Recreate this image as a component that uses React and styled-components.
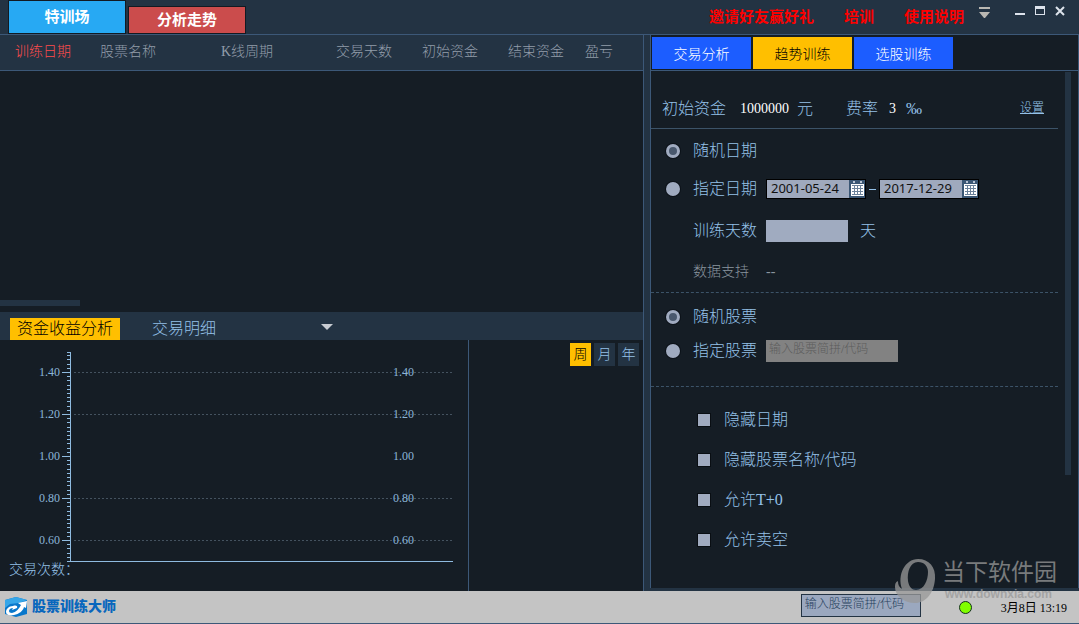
import React, { useState } from 'react';
import styled, { createGlobalStyle } from 'styled-components';

const GlobalStyle = createGlobalStyle`
  * {
    box-sizing: border-box;
  }
  body {
    margin: 0;
    background: #151d25;
    font-family: "Liberation Serif", "Noto Sans CJK SC", serif;
    font-size: 16px;
    font-weight: 300;
    color: #94c1e8;
  }
  button, input {
    margin: 0;
    padding: 0;
    border: 0;
    border-radius: 0;
    font: inherit;
    color: inherit;
    background: none;
  }
  button {
    cursor: pointer;
  }
`

const Window = styled.div`
  display: flex;
  flex-direction: column;
  min-height: 100vh;
  position: relative;
  overflow: hidden;
`

/* ---- title bar ---- */

const TitleBar = styled.header`
  display: flex;
  justify-content: space-between;
  height: 35px;
  background: #233343;
  border-bottom: 1px solid #3c5878;
`

const MainTabs = styled.nav`
  display: flex;
  align-items: flex-end;
  gap: 2px;
  padding-left: 8px;
`

const MainTab = styled.button`
  width: 118px;
  height: ${props => props.$active ? '34px' : '28px'};
  border: 1px solid #121a22;
  background: ${props => props.$active ? '#27a9f3' : '#cb4c4c'};
  color: #fff;
  font-size: 15px;
  line-height: 20px;
  font-weight: bold;
`

const TitleRight = styled.div`
  display: flex;
  align-items: flex-start;
`

const TitleLink = styled.a`
  margin-right: 30px;
  color: #fe0000;
  font-size: 15px;
  font-weight: bold;
  line-height: 34px;
  text-decoration: none;
  &:last-of-type {
    margin-right: 14px;
  }
`

const WindowButtons = styled.div`
  display: flex;
  gap: 8px;
  padding: 5px 13px 0 0;
`

const WindowButton = styled.button`
  width: 12px;
  height: 14px;
  margin-left: ${props => props.$spaced ? '16px' : '0'};
  svg {
    display: block;
  }
`

/* ---- body ---- */

const Body = styled.main`
  display: grid;
  grid-template-columns: minmax(0, 1fr) 429px;
  column-gap: 6px;
  flex: 1;
  background: #233343;
`

const LeftSide = styled.section`
  display: flex;
  flex-direction: column;
  background: #151d25;
  border-right: 1px solid #3c5878;
`

const RecordPane = styled.div`
  display: flex;
  flex-direction: column;
  justify-content: space-between;
  flex: 1;
`

const RecordTable = styled.table`
  width: 100%;
  table-layout: fixed;
  border-collapse: collapse;
`

const HeadRow = styled.tr`
  height: 35px;
  background: #233343;
  border-bottom: 1px solid #3c5878;
`

const HeadCell = styled.th`
  width: ${props => props.$width};
  padding: 0 0 0 15px;
  text-align: left;
  white-space: nowrap;
  font-size: 14px;
  font-weight: 300;
  line-height: 20px;
  color: ${props => props.$sorted ? '#ff4c4c' : '#929daa'};
`

const HorizontalThumb = styled.div`
  width: 80px;
  height: 6px;
  margin-bottom: 6px;
  background: #233343;
`

const AnalysisBar = styled.div`
  display: flex;
  align-items: flex-end;
  height: 28px;
  padding-left: 10px;
  background: #233343;
`

const AnalysisTab = styled.button`
  height: 22px;
  padding: 0 7px;
  line-height: 22px;
  white-space: nowrap;
  margin-right: 25px;
  background: ${props => props.$active ? '#ffbf00' : 'transparent'};
  color: ${props => props.$active ? '#000' : '#94c1e8'};
`

const DropButton = styled.button`
  width: 12px;
  height: 22px;
  margin-left: 73px;
  svg {
    display: block;
    margin-bottom: 4px;
  }
`

const ChartArea = styled.div`
  display: grid;
  grid-template-columns: minmax(0, 1fr) 175px;
  height: 251px;
`

const ChartPane = styled.div`
  svg {
    display: block;
  }
`

const TradeCount = styled.div`
  padding-left: 9px;
  font-size: 14px;
  line-height: 16px;
`

const PeriodPane = styled.div`
  display: flex;
  justify-content: flex-end;
  align-items: flex-start;
  gap: 3px;
  padding: 3px 4px;
  border-left: 1px solid #3c5878;
`

const PeriodButton = styled.button`
  width: 21px;
  height: 23px;
  font-size: 14px;
  line-height: 23px;
  background: ${props => props.$active ? '#ffbf00' : '#233343'};
  color: ${props => props.$active ? '#000' : '#94c1e8'};
`

/* ---- right side ---- */

const RightSide = styled.section`
  display: flex;
  flex-direction: column;
  margin-bottom: 3px;
  background: #151d25;
  border: 1px solid #3c5878;
  border-width: 0 1px;
`

const ModeTabs = styled.nav`
  display: flex;
  gap: 2px;
  height: 36px;
  padding: 2px 1px 1px;
  border-bottom: 1px solid #3c5878;
`

const ModeTab = styled.button`
  width: 99px;
  font-size: 14px;
  background: ${props => props.$active ? '#ffbf00' : '#1c5dff'};
  color: ${props => props.$active ? '#000' : '#fff'};
`

const FormPane = styled.div`
  display: flex;
  align-items: flex-start;
  padding: 0 7px 0 0;
`

const Form = styled.form`
  flex: 1;
  margin-right: 7px;
`

const VerticalThumb = styled.div`
  width: 6px;
  height: 403px;
  margin-top: 1px;
  background: #233343;
`

const Section = styled.div`
  padding: ${props => props.$pad};
  border-bottom: ${props => props.$line ? `1px ${props.$line} #3c5368` : '0'};
`

const Row = styled.div`
  display: flex;
  align-items: center;
  height: ${props => props.$height};
  padding-left: ${props => props.$indent || '15px'};
  white-space: nowrap;
`

const Caption = styled.label`
  display: flex;
  align-items: center;
  width: ${props => props.$width || 'auto'};
  line-height: 22px;
`

const Muted = styled.span`
  width: ${props => props.$width || 'auto'};
  font-size: 14px;
  line-height: 20px;
  color: #8a959f;
`

const PlainInput = styled.input`
  width: ${props => props.$width};
  margin-right: 7px;
  color: #fff;
  font-size: 14px;
  font-weight: normal;
  line-height: 20px;
`

const Unit = styled.span`
  margin-right: ${props => props.$gap || '0'};
  font-size: ${props => props.$size || '16px'};
  line-height: 22px;
`

const SettingLink = styled.a`
  margin: 0 14px 5px auto;
  color: #94c1e8;
  font-size: 12px;
`

const Radio = styled.input.attrs({ type: 'radio' })`
  appearance: none;
  width: 14px;
  height: 14px;
  margin-right: 13px;
  border-radius: 50%;
  background: #a0abc0;
  box-shadow: 0 0 0 1px #0c1219;
  &:checked {
    background: #49586d;
    border: 3px solid #a0abc0;
  }
`

const Check = styled.input.attrs({ type: 'checkbox' })`
  appearance: none;
  width: 14px;
  height: 14px;
  margin-right: 13px;
  border: 1px solid #090e13;
  background: #a0abc0;
  &:checked {
    background: #27a9f3;
  }
`

const DateBox = styled.span`
  display: flex;
  width: 100px;
  height: 20px;
  border: 1px solid #000;
  background: #9fa9bd;
`

const DateInput = styled.input`
  flex: 1;
  min-width: 0;
  padding: 0 0 2px 4px;
  color: #111;
  font-family: "Noto Sans", sans-serif;
  font-size: 13px;
  font-weight: normal;
`

const CalendarButton = styled.button`
  width: 16px;
  height: 18px;
  svg {
    display: block;
  }
`

const Dash = styled.span`
  width: 7px;
  height: 1px;
  margin: 0 3px;
  background: #94c1e8;
`

const DaysInput = styled.input`
  width: 82px;
  height: 22px;
  margin-right: 12px;
  padding: 0 4px;
  background: #a0abc0;
  color: #111;
`

const StockInput = styled.input`
  width: ${props => props.$width};
  height: ${props => props.$bordered ? '23px' : '22px'};
  margin-bottom: ${props => props.$bordered ? '3px' : '0'};
  padding: 0 3px 3px;
  border: ${props => props.$bordered ? '1px solid #233343' : '0'};
  background: ${props => props.$bordered ? '#9ba8bf' : '#828282'};
  color: #222;
  font-size: 12px;
  line-height: 16px;
  &::placeholder {
    color: ${props => props.$bordered ? '#26405c' : '#5c5c5c'};
    opacity: 1;
  }
`

/* ---- status bar ---- */

const StatusBar = styled.footer`
  display: flex;
  align-items: center;
  height: 33px;
  padding: 0 12px 0 4px;
  background: #c4c4c4;
  border-bottom: 1px solid #3c5878;
`

const Brand = styled.div`
  display: flex;
  align-items: center;
  gap: 4px;
  margin-right: auto;
  color: #0967bd;
  font-size: 14px;
  font-weight: 900;
  line-height: 20px;
`

const OnlineDot = styled.span`
  width: 13px;
  height: 13px;
  margin: 0 29px 0 38px;
  border: 1px solid #12301c;
  border-radius: 50%;
  background: #80ff00;
`

const Clock = styled.time`
  color: #000;
  font-size: 12px;
  font-weight: normal;
`

/* lies over the bottom right corner */
const Watermark = styled.div`
  position: absolute;
  right: 22px;
  bottom: 20px;
  display: flex;
  align-items: flex-start;
  gap: 5px;
  opacity: 0.75;
  color: #999;
  pointer-events: none;
`

const WatermarkName = styled.div`
  margin-top: 2px;
  font-size: 23px;
  font-weight: normal;
  line-height: 26px;
`

const WatermarkSite = styled.div`
  padding-left: 3px;
  font-family: "Liberation Sans", sans-serif;
  font-size: 12px;
  font-weight: bold;
  line-height: 16px;
`

const columns = [
  { title: '训练日期', width: '85px' },
  { title: '股票名称', width: '121px' },
  { title: 'K线周期', width: '115px' },
  { title: '交易天数', width: '86px' },
  { title: '初始资金', width: '86px' },
  { title: '结束资金', width: '77px' },
  { title: '盈亏', width: 'auto' },
];

const levels = [
  { label: '1.40', y: 32 },
  { label: '1.20', y: 74 },
  { label: '1.00', y: 116, base: true },
  { label: '0.80', y: 158 },
  { label: '0.60', y: 200 },
];

const modes = ['交易分析', '趋势训练', '选股训练'];
const periods = ['周', '月', '年'];
const options = ['隐藏日期', '隐藏股票名称/代码', '允许T+0', '允许卖空'];

const ProfitChart = () => {
  const ticks = Array.from({ length: 50 }, (_, i) => Math.round(221 - i * 4.2));
  return (
    <svg width="460" height="222" shapeRendering="crispEdges">
      {ticks.map(y => <rect key={y} x="67" y={y} width="3" height="1" fill="#8fbbe0" />)}
      <rect x="67" y="12" width="3" height="1" fill="#8fbbe0" />
      <rect x="70" y="12" width="1" height="210" fill="#8fbbe0" />
      <rect x="67" y="221" width="386" height="1" fill="#8fbbe0" />
      {levels.map(({ label, y, base }) => (
        <g key={label}>
          <rect x="62" y={y} width="8" height="1" fill="#8fbbe0" />
          {!base && (
            <path d={`M74 ${y + 0.5}H453`} stroke="#44525f" strokeDasharray="2 2" />
          )}
          <text x="60" y={y + 4} textAnchor="end" fontSize="12" fontWeight="400" fill="#8bb5d8">{label}</text>
          <text x="393" y={y + 4} fontSize="12" fontWeight="400" fill="#8bb5d8">{label}</text>
        </g>
      ))}
    </svg>
  );
}

const CalendarIcon = () => (
  <svg width="16" height="18" shapeRendering="crispEdges">
    <rect width="16" height="18" fill="#3a5674" />
    <path d="M2 4h13v12H2z" fill="#fff" />
    <path d="M4 1h2v2H4zM11 1h2v2h-2z" fill="#b9c4d4" />
    <path d="M3 6h2v2H3zM6 6h2v2H6zM9 6h2v2H9zM12 6h2v2h-2zM3 9h2v2H3zM6 9h2v2H6zM9 9h2v2H9zM12 9h2v2h-2zM3 12h2v2H3zM6 12h2v2H6zM9 12h2v2H9zM12 12h2v2h-2z" fill="#fff" />
    <path d="M3 5.5h11M3 8.5h11M3 11.5h11M3 14.5h11M5.5 5v10M8.5 5v10M11.5 5v10" stroke="#6c829b" />
  </svg>
)

const DateField = ({ label, value }) => {
  const [text, setText] = useState(value);
  return (
    <DateBox>
      <DateInput aria-label={label} value={text} onChange={e => setText(e.target.value)} />
      <CalendarButton type="button" aria-label="日历"><CalendarIcon /></CalendarButton>
    </DateBox>
  );
}

const BrandLogo = () => (
  <svg width="24" height="22" viewBox="0 0 24 22">
    <path d="M1 4 12 1 23 4v14l-11 3L1 18z" fill="#0877cb" />
    <path d="M1 4 12 1 23 4l-8 3-9 1-5 4z" fill="#35a6e8" />
    <path d="M23 5 14 7l3 2c-2 4-5 7-9 8-2 0-3-1-3-2 0-2 2-3 4-3l-1 2 5-2c1-2-1-3-4-2-4 0-7 3-7 6 0 3 4 4 8 3 5-1 9-4 10-8l2 1z" fill="#fff" />
  </svg>
)

const WatermarkLogo = () => (
  <svg width="44" height="46" viewBox="0 0 44 46">
    <path
      fillRule="evenodd"
      d="M25 1C36 1 43 9 42 21c-1 14-9 24-20 24C11 45 2 38 2 29c0-4 1-5 3-6 0 4 1 6 4 8C4 17 12 1 25 1zM25 4C17 4 14 14 15 23c1 6 4 9 8 9 8 0 12-10 12-18 0-6-4-10-10-10z"
      fill="#999"
    />
  </svg>
)

const App = () => {
  const [mode, setMode] = useState('趋势训练');
  const [period, setPeriod] = useState('周');

  return (
    <Window>
      <GlobalStyle />
      <TitleBar>
        <MainTabs>
          <MainTab $active>特训场</MainTab>
          <MainTab>分析走势</MainTab>
        </MainTabs>
        <TitleRight>
          <TitleLink href="#invite">邀请好友赢好礼</TitleLink>
          <TitleLink href="#train">培训</TitleLink>
          <TitleLink href="#help">使用说明</TitleLink>
          <WindowButtons>
            <WindowButton aria-label="菜单">
              <svg width="12" height="14"><path d="M1 2h11v2H1zM1 7h11l-5 6H6z" fill="#b9b7b2" /></svg>
            </WindowButton>
            <WindowButton $spaced aria-label="最小化">
              <svg width="12" height="14"><path d="M1 8h10v2H1z" fill="#dde3ec" /></svg>
            </WindowButton>
            <WindowButton aria-label="最大化">
              <svg width="12" height="14"><path fillRule="evenodd" d="M1 1h10v9H1zM2 4v5h8V4z" fill="#dde3ec" /></svg>
            </WindowButton>
            <WindowButton aria-label="关闭">
              <svg width="12" height="14"><path d="m2 2 8 8M10 2l-8 8" stroke="#dde3ec" strokeWidth="2" /></svg>
            </WindowButton>
          </WindowButtons>
        </TitleRight>
      </TitleBar>

      <Body>
        <LeftSide>
          <RecordPane>
            <RecordTable>
              <thead>
                <HeadRow>
                  {columns.map((col, i) => (
                    <HeadCell key={col.title} $width={col.width} $sorted={i === 0}>{col.title}</HeadCell>
                  ))}
                </HeadRow>
              </thead>
              <tbody />
            </RecordTable>
            <HorizontalThumb />
          </RecordPane>
          <AnalysisBar>
            <AnalysisTab $active>资金收益分析</AnalysisTab>
            <AnalysisTab>交易明细</AnalysisTab>
            <DropButton aria-label="展开">
              <svg width="12" height="7"><path d="M0 0h12L6 6z" fill="#c8ccd2" /></svg>
            </DropButton>
          </AnalysisBar>
          <ChartArea>
            <ChartPane>
              <ProfitChart />
              <TradeCount>交易次数：</TradeCount>
            </ChartPane>
            <PeriodPane>
              {periods.map(p => (
                <PeriodButton key={p} $active={p === period} onClick={() => setPeriod(p)}>{p}</PeriodButton>
              ))}
            </PeriodPane>
          </ChartArea>
        </LeftSide>

        <RightSide>
          <ModeTabs>
            {modes.map(m => (
              <ModeTab key={m} $active={m === mode} onClick={() => setMode(m)}>{m}</ModeTab>
            ))}
          </ModeTabs>
          <FormPane>
            <Form>
              <Section $pad="19px 0 0" $line="solid">
                <Row $height="38px" $indent="11px">
                  <Caption htmlFor="money" $width="78px">初始资金</Caption>
                  <PlainInput id="money" $width="50px" defaultValue="1000000" />
                  <Unit $gap="33px">元</Unit>
                  <Caption htmlFor="rate" $width="43px">费率</Caption>
                  <PlainInput id="rate" $width="10px" defaultValue="3" />
                  <Unit>‰</Unit>
                  <SettingLink href="#setting">设置</SettingLink>
                </Row>
              </Section>
              <Section $pad="3px 0 2px" $line="dashed">
                <Row $height="38px">
                  <Caption><Radio name="date" defaultChecked />随机日期</Caption>
                </Row>
                <Row $height="38px">
                  <Caption $width="100px"><Radio name="date" />指定日期</Caption>
                  <DateField label="开始日期" value="2001-05-24" />
                  <Dash />
                  <DateField label="结束日期" value="2017-12-29" />
                </Row>
                <Row $height="46px" $indent="42px">
                  <Caption htmlFor="days" $width="73px">训练天数</Caption>
                  <DaysInput id="days" />
                  <Unit>天</Unit>
                </Row>
                <Row $height="36px" $indent="42px">
                  <Muted $width="73px">数据支持</Muted>
                  <Muted>--</Muted>
                </Row>
              </Section>
              <Section $pad="7px 0 18px" $line="dashed">
                <Row $height="34px">
                  <Caption><Radio name="stock" defaultChecked />随机股票</Caption>
                </Row>
                <Row $height="34px">
                  <Caption $width="100px"><Radio name="stock" />指定股票</Caption>
                  <StockInput $width="132px" aria-label="指定股票代码" placeholder="输入股票简拼/代码" />
                </Row>
              </Section>
              <Section $pad="13px 0 0">
                {options.map(option => (
                  <Row key={option} $height="40px" $indent="46px">
                    <Caption><Check />{option}</Caption>
                  </Row>
                ))}
              </Section>
            </Form>
            <VerticalThumb />
          </FormPane>
        </RightSide>
      </Body>

      <StatusBar>
        <Brand>
          <BrandLogo />
          股票训练大师
        </Brand>
        <StockInput $width="120px" $bordered aria-label="搜索股票" placeholder="输入股票简拼/代码" />
        <OnlineDot />
        <Clock>3月8日 13:19</Clock>
      </StatusBar>

      <Watermark>
        <WatermarkLogo />
        <div>
          <WatermarkName>当下软件园</WatermarkName>
          <WatermarkSite>www.downxia.com</WatermarkSite>
        </div>
      </Watermark>
    </Window>
  );
}

export default App;
